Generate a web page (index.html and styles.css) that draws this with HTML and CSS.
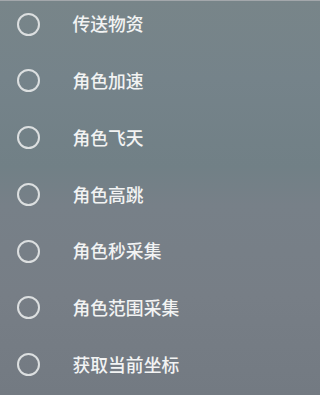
FILE: index.html
```html
<!DOCTYPE html>
<html lang="zh">
<head>
<meta charset="utf-8">
<link rel="stylesheet" href="styles.css">
</head>
<body>
<ul class="list">
  <li class="item"><span class="radio"></span><span class="label">传送物资</span></li>
  <li class="item"><span class="radio"></span><span class="label">角色加速</span></li>
  <li class="item"><span class="radio"></span><span class="label">角色飞天</span></li>
  <li class="item"><span class="radio"></span><span class="label">角色高跳</span></li>
  <li class="item"><span class="radio"></span><span class="label">角色秒采集</span></li>
  <li class="item"><span class="radio"></span><span class="label">角色范围采集</span></li>
  <li class="item"><span class="radio"></span><span class="label">获取当前坐标</span></li>
</ul>
</body>
</html>
```
FILE: styles.css
```css
html, body {
  margin: 0;
  padding: 0;
  height: 100%;
  overflow: hidden;
}
body {
  background: linear-gradient(to bottom, #788589 0%, #75838a 20%, #718086 42%, #778088 52%, #777e86 75%, #737a82 100%);
  border-top: 1px solid #a3a7ab;
  box-sizing: border-box;
  font-family: "Noto Sans CJK SC", "Noto Sans", sans-serif;
}
.list {
  list-style: none;
  margin: -5.4px 0 0 0;
  padding: 0;
}
.item {
  display: flex;
  align-items: center;
  height: 56.8px;
}
.radio {
  box-sizing: border-box;
  width: 23px;
  height: 23px;
  margin-left: 16.5px;
  border: 2px solid #dcdfe0;
  border-radius: 50%;
  flex: none;
}
.label {
  margin-left: 33px;
  color: #f2f3f3;
  font-size: 17.8px;
  font-weight: 500;
  line-height: 1;
}
```
